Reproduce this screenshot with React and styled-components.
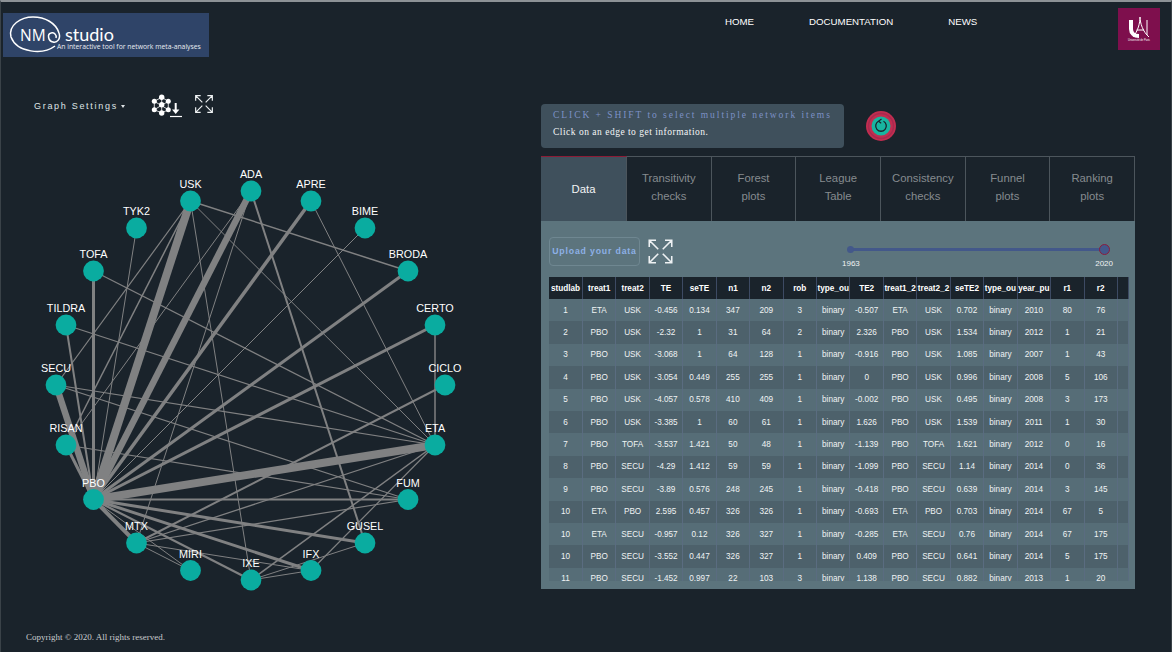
import React from 'react';
import styled, { createGlobalStyle } from 'styled-components';

const GlobalStyle = createGlobalStyle`
  html, body { margin: 0; padding: 0; background: #1a232b; }
  body { font-family: "Liberation Sans", Arial, sans-serif; }
`;

const Page = styled.div`
  width: 1172px;
  height: 652px;
  box-sizing: border-box;
  overflow: hidden;
  border-top: 2px solid #8d9296;
  border-left: 1px solid #3a4248;
  border-right: 1px solid #3a4248;
  background: #1a232b;
  display: flex;
  flex-direction: column;
`;

const Header = styled.header`
  height: 56px;
  box-sizing: border-box;
  flex: none;
  display: flex;
  align-items: flex-start;
  padding: 6px 11px 0 2px;
`;

const LogoBox = styled.div`
  width: 206px;
  height: 44px;
  margin-top: 5px;
  background: #2f4468;
  color: #fff;
  flex: none;
`;

const Nav = styled.nav`
  display: flex;
  margin-left: 516px;
  gap: 55px;
  padding-top: 8px;
  flex: 1;
`;

const NavLink = styled.a`
  color: #fff;
  font-size: 9.7px;
  line-height: 12px;
`;

const Main = styled.div`
  flex: 1;
  display: grid;
  grid-template-columns: 540px 594px;
  min-height: 0;
`;

const Left = styled.section`
  display: flex;
  flex-direction: column;
  min-height: 0;
`;

const GraphBar = styled.div`
  height: 36px;
  margin-top: 28px;
  padding-left: 33px;
  display: flex;
  align-items: center;
`;

const SettingsButton = styled.span`
  font-size: 9px;
  letter-spacing: 1.7px;
  color: #dfe3e6;
  width: 117px;
  display: flex;
  align-items: center;
  margin-top: 4px;
`;

const Caret = styled.i`
  width: 0;
  height: 0;
  margin-left: 3px;
  border: 2.5px solid transparent;
  border-top: 3px solid #dfe3e6;
  border-bottom: 0;
`;

const IconSlot = styled.div`
  display: flex;
  flex: none;
  margin-top: ${(p) => p.$top || 0}px;
  margin-left: ${(p) => p.$left || 0}px;
`;

const GraphCanvas = styled.svg`
  display: block;
  margin: 2px 0 0 -1px;
  flex: none;
`;

const Copyright = styled.footer`
  font-family: "Liberation Serif", serif;
  font-size: 9px;
  color: #c9ccce;
  margin-top: auto;
  padding: 0 0 10px 25px;
`;

const Right = styled.section`
  display: flex;
  flex-direction: column;
  padding-top: 46px;
`;

const InfoRow = styled.div`
  display: flex;
  align-items: center;
  gap: 22px;
  height: 44px;
`;

const InfoBox = styled.div`
  width: 303px;
  height: 44px;
  box-sizing: border-box;
  padding: 6px 0 0 12px;
  background: #3f505c;
  border-radius: 4px;
  font-family: "Liberation Serif", serif;
`;

const InfoLine = styled.div`
  font-size: 9.5px;
  line-height: ${(p) => (p.$accent ? 11 : 16)}px;
  margin-top: ${(p) => (p.$accent ? 0 : 3)}px;
  letter-spacing: ${(p) => (p.$accent ? 1.95 : 0.5)}px;
  color: ${(p) => (p.$accent ? '#7d91c6' : '#f4f5f6')};
  white-space: nowrap;
`;

const ResetButton = styled.div`
  width: 30px;
  height: 30px;
  flex: none;
`;

const Tabs = styled.div`
  display: grid;
  grid-template-columns: 86px repeat(6, 1fr);
  height: 65px;
  margin-top: 8px;
  box-sizing: border-box;
`;

const Tab = styled.div`
  box-sizing: border-box;
  display: flex;
  align-items: center;
  justify-content: center;
  text-align: center;
  font-size: 11.3px;
  line-height: 18px;
  color: ${(p) => (p.$active ? '#f2f4f5' : '#868b8f')};
  background: ${(p) => (p.$active ? '#3f505c' : 'transparent')};
  border-top: 1px solid ${(p) => (p.$active ? '#8c1c36' : '#4c555c')};
  border-right: 1px solid #4c555c;
  padding-bottom: ${(p) => (p.$active ? 0 : 4)}px;
`;

const Panel = styled.div`
  height: 368px;
  box-sizing: border-box;
  background: #5c747d;
  padding: 15px 6px 8px 8px;
  display: flex;
  flex-direction: column;
`;

const Toolbar = styled.div`
  display: flex;
  align-items: center;
  height: 30px;
  margin-bottom: 11px;
`;

const UploadButton = styled.div`
  width: 91px;
  height: 29px;
  box-sizing: border-box;
  border: 1px solid #6f8791;
  border-radius: 4px;
  display: flex;
  align-items: center;
  justify-content: center;
  color: #8db0e6;
  font-size: 8.7px;
  font-weight: 700;
  letter-spacing: 0.85px;
  white-space: nowrap;
`;

const RangeWrap = styled.div`
  width: 255px;
  margin-left: 176px;
  padding-top: 11px;
  flex: none;
`;

const Track = styled.div`
  position: relative;
  height: 3px;
  margin-top: 2px;
  background: #43588a;
`;

const StartDot = styled.i`
  position: absolute;
  left: -3px;
  top: -2px;
  width: 7px;
  height: 7px;
  border-radius: 50%;
  background: #43588a;
`;

const EndDot = styled.i`
  position: absolute;
  right: -5px;
  top: -4px;
  width: 11px;
  height: 11px;
  box-sizing: border-box;
  border-radius: 50%;
  background: #43588a;
  border: 1px solid #8c1c3e;
`;

const RangeLabels = styled.div`
  display: flex;
  justify-content: space-between;
  margin: 8px -8px 0 -8px;
  font-size: 8px;
  color: #f0f2f3;
`;

const TableClip = styled.div`
  height: 304px;
  overflow: hidden;
  width: 580px;
`;

const Table = styled.table`
  border-collapse: collapse;
  table-layout: fixed;
  width: 580px;
  font-size: 8.2px;
`;

const HeadCell = styled.th`
  background: #1a232b;
  color: #fff;
  height: 22px;
  padding: 0;
  font-size: 8.2px;
  font-weight: 700;
  overflow: hidden;
  white-space: nowrap;
  border-right: 1px solid #3d4a63;
  box-sizing: border-box;
`;

const Row = styled.tr`
  background: ${(p) => (p.$odd ? '#566d77' : '#4d616b')};
`;

const Cell = styled.td`
  color: #f0f3f4;
  text-align: center;
  padding: 0;
  height: 22.4px;
  overflow: hidden;
  white-space: nowrap;
  border-right: 1px solid #5a6c80;
  box-sizing: border-box;
`;

const UniversityBox = styled.div`
  width: 42px;
  height: 42px;
  background: #7e0f4d;
  flex: none;
`;

const columns = ['studlab', 'treat1', 'treat2', 'TE', 'seTE', 'n1', 'n2', 'rob', 'type_ou', 'TE2', 'treat1_2', 'treat2_2', 'seTE2', 'type_ou', 'year_pu', 'r1', 'r2'];

const rows = [
  [1, 'ETA', 'USK', -0.456, 0.134, 347, 209, 3, 'binary', -0.507, 'ETA', 'USK', 0.702, 'binary', 2010, 80, 76],
  [2, 'PBO', 'USK', -2.32, 1, 31, 64, 2, 'binary', 2.326, 'PBO', 'USK', 1.534, 'binary', 2012, 1, 21],
  [3, 'PBO', 'USK', -3.068, 1, 64, 128, 1, 'binary', -0.916, 'PBO', 'USK', 1.085, 'binary', 2007, 1, 43],
  [4, 'PBO', 'USK', -3.054, 0.449, 255, 255, 1, 'binary', 0, 'PBO', 'USK', 0.996, 'binary', 2008, 5, 106],
  [5, 'PBO', 'USK', -4.057, 0.578, 410, 409, 1, 'binary', -0.002, 'PBO', 'USK', 0.495, 'binary', 2008, 3, 173],
  [6, 'PBO', 'USK', -3.385, 1, 60, 61, 1, 'binary', 1.626, 'PBO', 'USK', 1.539, 'binary', 2011, 1, 30],
  [7, 'PBO', 'TOFA', -3.537, 1.421, 50, 48, 1, 'binary', -1.139, 'PBO', 'TOFA', 1.621, 'binary', 2012, 0, 16],
  [8, 'PBO', 'SECU', -4.29, 1.412, 59, 59, 1, 'binary', -1.099, 'PBO', 'SECU', 1.14, 'binary', 2014, 0, 36],
  [9, 'PBO', 'SECU', -3.89, 0.576, 248, 245, 1, 'binary', -0.418, 'PBO', 'SECU', 0.639, 'binary', 2014, 3, 145],
  [10, 'ETA', 'PBO', 2.595, 0.457, 326, 326, 1, 'binary', -0.693, 'ETA', 'PBO', 0.703, 'binary', 2014, 67, 5],
  [10, 'ETA', 'SECU', -0.957, 0.12, 326, 327, 1, 'binary', -0.285, 'ETA', 'SECU', 0.76, 'binary', 2014, 67, 175],
  [10, 'PBO', 'SECU', -3.552, 0.447, 326, 327, 1, 'binary', 0.409, 'PBO', 'SECU', 0.641, 'binary', 2014, 5, 175],
  [11, 'PBO', 'SECU', -1.452, 0.997, 22, 103, 3, 'binary', 1.138, 'PBO', 'SECU', 0.882, 'binary', 2013, 1, 20],
];

// node centres in page coordinates, the svg viewBox starts at its own page y
const Y0 = 124;
const nodes = {
  USK: [190.5, 201], ADA: [251, 191], APRE: [311, 201], BIME: [365, 228], BRODA: [408, 271],
  CERTO: [435, 325], CICLO: [445, 385], ETA: [435, 445], FUM: [408, 499.5], GUSEL: [365, 543],
  IFX: [311, 570.5], IXE: [251, 580], MIRI: [190.5, 570.5], MTX: [136.5, 543], PBO: [93.5, 499.5],
  RISAN: [66, 445], SECU: [56, 385], TILDRA: [66, 325], TOFA: [93.5, 271], TYK2: [136.5, 228],
};

const edges = [
  ['PBO', 'ETA', 8], ['PBO', 'USK', 8], ['PBO', 'ADA', 6.5], ['PBO', 'SECU', 6.5], ['PBO', 'APRE', 3.5],
  ['PBO', 'BRODA', 3], ['PBO', 'CERTO', 3], ['PBO', 'RISAN', 3], ['PBO', 'TOFA', 3], ['PBO', 'TILDRA', 2],
  ['PBO', 'MTX', 4], ['PBO', 'IFX', 3], ['PBO', 'GUSEL', 3], ['PBO', 'IXE', 2.2], ['PBO', 'FUM', 1.8],
  ['PBO', 'MIRI', 1], ['PBO', 'TYK2', 1], ['PBO', 'BIME', 1],
  ['USK', 'BRODA', 1.5], ['USK', 'SECU', 1.2], ['USK', 'IXE', 1], ['USK', 'RISAN', 1.5], ['USK', 'ETA', 1],
  ['ADA', 'GUSEL', 2], ['ADA', 'MTX', 1], ['ADA', 'RISAN', 1], ['APRE', 'ETA', 1],
  ['CERTO', 'ETA', 1.5], ['MTX', 'CICLO', 2], ['TOFA', 'ETA', 1.2], ['TILDRA', 'ETA', 1.2],
  ['SECU', 'FUM', 1.2], ['SECU', 'ETA', 1.2], ['RISAN', 'FUM', 1.2], ['MTX', 'ETA', 1.3],
  ['IXE', 'ETA', 1.5], ['IFX', 'ETA', 1.2], ['MTX', 'FUM', 1.2], ['IXE', 'GUSEL', 1],
  ['MTX', 'IFX', 1], ['MTX', 'MIRI', 1], ['IXE', 'IFX', 1],
];

const NetworkGraph = () => (
  <GraphCanvas width="500" height="480" viewBox={`0 ${Y0} 500 480`}>
    {edges.map(([a, b, w]) => (
      <line key={a + b} x1={nodes[a][0]} y1={nodes[a][1]} x2={nodes[b][0]} y2={nodes[b][1]} stroke="#808182" strokeWidth={w} />
    ))}
    {Object.entries(nodes).map(([name, [x, y]]) => (
      <g key={name}>
        <circle cx={x} cy={y} r="10.4" fill="#0aaca0" />
        <text x={x} y={y - 13} textAnchor="middle" fontSize="10.8" fill="#fff" fontFamily="'Liberation Sans', Arial, sans-serif">{name}</text>
      </g>
    ))}
  </GraphCanvas>
);

const ExpandIcon = ({ size }) => (
  <svg width={size} height={size} viewBox="0 0 24 24" fill="none" stroke="#eef1f3" strokeWidth="1.4">
    <path d="M10 10L2 2M2 8V2h6M14 10l8-8M16 2h6v6M10 14l-8 8M2 16v6h6M14 14l8 8M22 16v6h-6" />
  </svg>
);

const NetworkDownloadIcon = () => (
  <svg width="32" height="24" viewBox="0 0 32 24" fill="none">
    <path d="M3.3 7.3L10.7 3.3L17.3 7.3L17.3 15.7L10.7 19L3.3 15.7ZM10.7 3.3V19M3.3 7.3L17.3 15.7M3.3 15.7L17.3 7.3" stroke="#fff" strokeWidth="0.8" />
    <g fill="#fff">
      <circle cx="10.7" cy="3.3" r="2.7" />
      <circle cx="3.3" cy="7.3" r="2.5" />
      <circle cx="17.3" cy="7.3" r="2.5" />
      <circle cx="10.7" cy="10.7" r="2.7" />
      <circle cx="3.3" cy="15.7" r="2.5" />
      <circle cx="17.3" cy="15.7" r="2.5" />
      <circle cx="10.7" cy="19" r="2.7" />
    </g>
    <path d="M24.7 9V16" stroke="#fff" strokeWidth="2" />
    <path d="M21 15.5H28.4L24.7 20Z" fill="#fff" />
    <path d="M19 22.5H31" stroke="#fff" strokeWidth="1.2" />
  </svg>
);

const LogoArt = () => (
  <svg width="206" height="44" viewBox="0 0 206 44">
    <path d="M52 33C40 42 14 40 8 24C5 12 18 4 30 4C42 4 53 10 56 20C58 26 54 30 50 29C45 28 44 21 48 20C51 19 54 22 53 25" fill="none" stroke="#fff" strokeWidth="1.5" />
    <text x="17" y="28" fontFamily="'Open Sans', sans-serif" fontSize="15.5" fill="#fff">NM</text>
    <text x="62" y="28" fontFamily="'Lato', sans-serif" fontSize="18" fill="#fff">studio</text>
    <text x="54" y="36" fontFamily="'Open Sans', sans-serif" fontSize="6.8" fill="#e8ecf2">An interactive tool for network meta-analyses</text>
  </svg>
);

const UniversityLogo = () => (
  <UniversityBox>
    <svg width="42" height="42" viewBox="0 0 42 42" fill="none">
      <path d="M13 12V21C13 25 16 28 21 28" stroke="#fff" strokeWidth="4" />
      <path d="M22 9C22 15 20 23 15 29M22 9C22 15 25 24 31 29M18.5 22H26M29 12V27" stroke="#fff" strokeWidth="1" />
      <text x="21" y="33" textAnchor="middle" fontSize="2.6" fill="#fff" fontFamily="'Liberation Sans', sans-serif">Université de Paris</text>
    </svg>
  </UniversityBox>
);

const ResetIcon = () => (
  <svg width="30" height="30" viewBox="0 0 30 30" fill="none">
    <circle cx="15" cy="15" r="15" fill="#c22d50" />
    <circle cx="15" cy="15" r="12.5" fill="none" stroke="#a82a4f" strokeWidth="1.5" />
    <circle cx="15" cy="15" r="9.5" fill="#18b5a0" />
    <path d="M12.5 10.3A5.3 5.3 0 1 0 17.5 10.3" stroke="#1a232b" strokeWidth="1.3" />
    <path d="M15.5 8L12.5 10.2L15.2 12.2" stroke="#1a232b" strokeWidth="1.1" />
  </svg>
);

const tabs = [['Data'], ['Transitivity', 'checks'], ['Forest', 'plots'], ['League', 'Table'], ['Consistency', 'checks'], ['Funnel', 'plots'], ['Ranking', 'plots']];

export default function App() {
  return (
    <Page>
      <GlobalStyle />
      <Header>
        <LogoBox><LogoArt /></LogoBox>
        <Nav>
          <NavLink>HOME</NavLink>
          <NavLink>DOCUMENTATION</NavLink>
          <NavLink>NEWS</NavLink>
        </Nav>
        <UniversityLogo />
      </Header>
      <Main>
        <Left>
          <GraphBar>
            <SettingsButton>Graph Settings<Caret /></SettingsButton>
            <IconSlot $top={4}><NetworkDownloadIcon /></IconSlot>
            <IconSlot $left={11}><ExpandIcon size={20} /></IconSlot>
          </GraphBar>
          <NetworkGraph />
          <Copyright>Copyright © 2020. All rights reserved.</Copyright>
        </Left>
        <Right>
          <InfoRow>
            <InfoBox>
              <InfoLine $accent>CLICK + SHIFT to select multiple network items</InfoLine>
              <InfoLine>Click on an edge to get information.</InfoLine>
            </InfoBox>
            <ResetButton><ResetIcon /></ResetButton>
          </InfoRow>
          <Tabs>
            {tabs.map((t, i) => (
              <Tab key={t[0]} $active={i === 0}>
                <span>{t[0]}{t[1] && <br />}{t[1]}</span>
              </Tab>
            ))}
          </Tabs>
          <Panel>
            <Toolbar>
              <UploadButton>Upload your data</UploadButton>
              <IconSlot $left={7}><ExpandIcon size={27} /></IconSlot>
              <RangeWrap>
                <Track><StartDot /><EndDot /></Track>
                <RangeLabels><span>1963</span><span>2020</span></RangeLabels>
              </RangeWrap>
            </Toolbar>
            <TableClip>
              <Table>
                <colgroup>
                  {columns.map((c, i) => <col key={i} style={{ width: '33.45px' }} />)}
                  <col />
                </colgroup>
                <thead>
                  <tr>
                    {columns.map((c, i) => <HeadCell key={i}>{c}</HeadCell>)}
                    <HeadCell />
                  </tr>
                </thead>
                <tbody>
                  {rows.map((r, i) => (
                    <Row key={i} $odd={i % 2 === 0}>
                      {r.map((v, j) => <Cell key={j}>{v}</Cell>)}
                      <Cell />
                    </Row>
                  ))}
                </tbody>
              </Table>
            </TableClip>
          </Panel>
        </Right>
      </Main>
    </Page>
  );
}
